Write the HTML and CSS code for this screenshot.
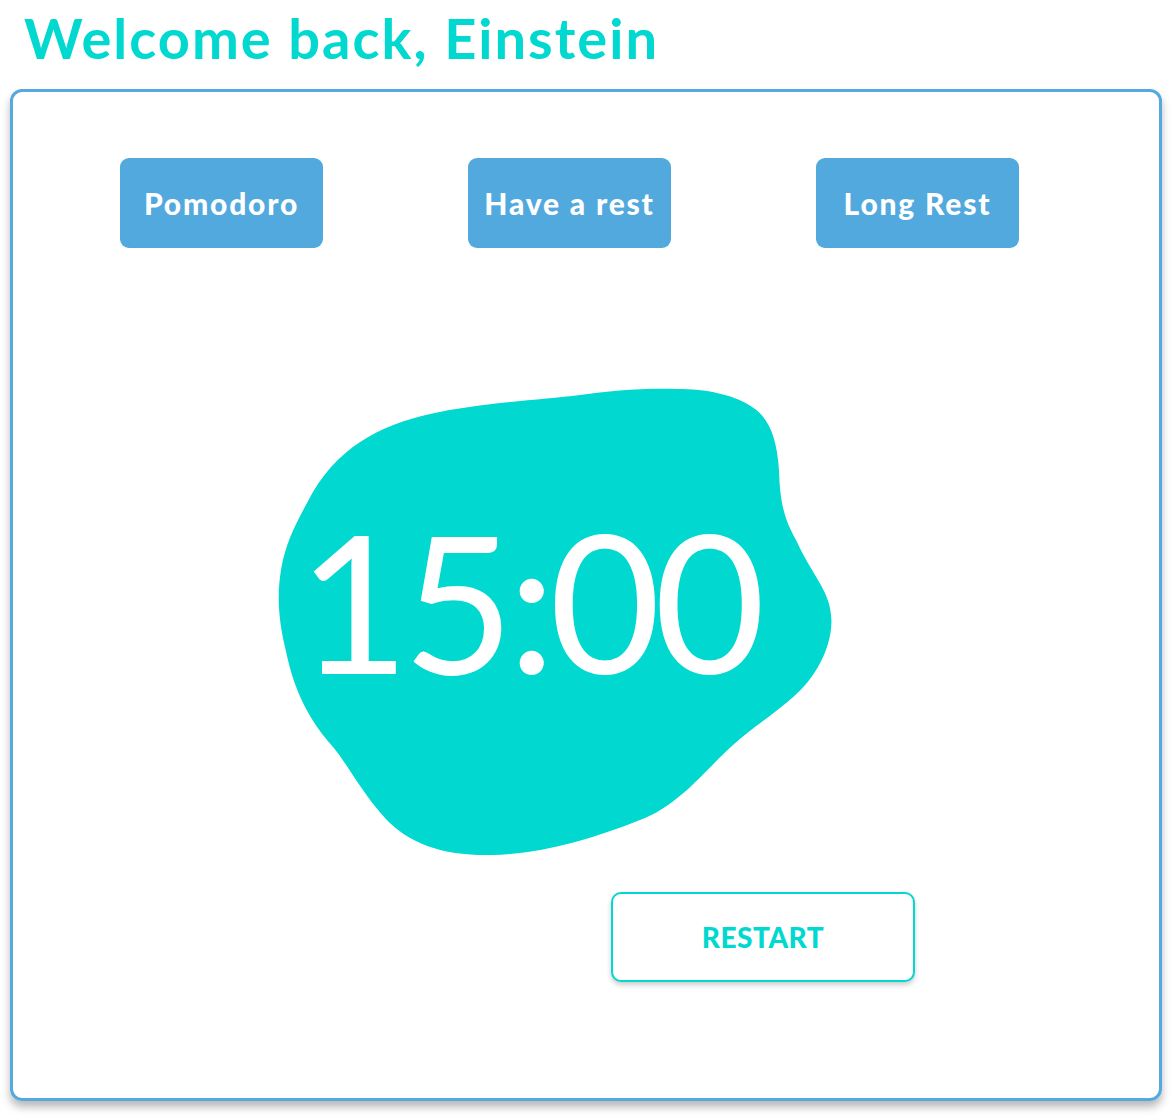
FILE: index.html
```html
<!DOCTYPE html>
<html lang="en">
<head>
<meta charset="utf-8">
<title>Pomodoro</title>
<link rel="stylesheet" href="styles.css">
</head>
<body>
  <h1 class="greeting">Welcome back, Einstein</h1>
  <main class="card">
    <nav class="modes">
      <button class="mode">Pomodoro</button>
      <button class="mode">Have a rest</button>
      <button class="mode">Long Rest</button>
    </nav>
    <section class="timer">
      <svg class="blob" width="570" height="480" viewBox="270 380 570 480" aria-hidden="true">
        <path fill="#00d8d0" d="M677 389 C640 388 610 391 580 395 C540 400 480 403 430 414 C381 425 335 447 307 503 C295 525 285 545 281 570 C276 600 280 625 285 647 C291 675 300 710 333 747 C348 765 360 790 385 818 C410 845 445 856 492 855 C540 854 590 840 640 820 C680 805 705 770 733 745 C760 720 800 700 818 667 C828 650 833 630 831 615 C829 590 812 575 796 540 C785 520 780 505 779 470 C777 440 770 420 755 409 C735 394 705 389 677 389 Z"/>
      </svg>
      <div class="time">15:00</div>
    </section>
    <button class="restart">RESTART</button>
  </main>
</body>
</html>
```
FILE: styles.css
```css
html, body {
  margin: 0;
  padding: 0;
  background: #ffffff;
}
body {
  width: 1176px;
  height: 1119px;
  font-family: "Lato", "Noto Sans", sans-serif;
}
.greeting {
  margin: 0;
  padding: 6px 0 0 24px;
  height: 89px;
  box-sizing: border-box;
  font-size: 56px;
  font-weight: 700;
  line-height: 64px;
  letter-spacing: 2px;
  color: #00d8d0;
}
.card {
  margin-left: 10px;
  width: 1152px;
  height: 1012px;
  box-sizing: border-box;
  border: 3px solid #55a9de;
  border-radius: 12px;
  box-shadow: 0 6px 8px rgba(0, 0, 0, 0.28);
  padding-top: 66px;
  display: flex;
  flex-direction: column;
  align-items: flex-start;
}
.modes {
  display: flex;
  gap: 145px;
  padding-left: 107px;
}
.mode {
  width: 203px;
  height: 90px;
  border: none;
  border-radius: 9px;
  background: #52a9dd;
  color: #ffffff;
  font-family: "Lato", sans-serif;
  font-weight: 900;
  font-size: 30px;
  letter-spacing: 1.8px;
  padding: 0;
}
.timer {
  position: relative;
  margin-top: 132px;
  margin-left: 257px;
  width: 570px;
  height: 480px;
}
.blob {
  display: block;
}
.time {
  position: absolute;
  left: 28px;
  top: 124px;
  color: #ffffff;
  font-family: "Lato", sans-serif;
  font-weight: 400;
  font-size: 192px;
  line-height: 192px;
  letter-spacing: -6.5px;
}
.restart {
  margin-top: 32px;
  margin-left: 598px;
  width: 304px;
  height: 90px;
  background: #ffffff;
  border: 2px solid #00d8d0;
  border-radius: 10px;
  box-shadow: 0 3px 5px rgba(0, 0, 0, 0.2);
  color: #00d8d0;
  font-family: "Lato", sans-serif;
  font-weight: 900;
  font-size: 28px;
  letter-spacing: 0.5px;
  padding: 0;
}
```
